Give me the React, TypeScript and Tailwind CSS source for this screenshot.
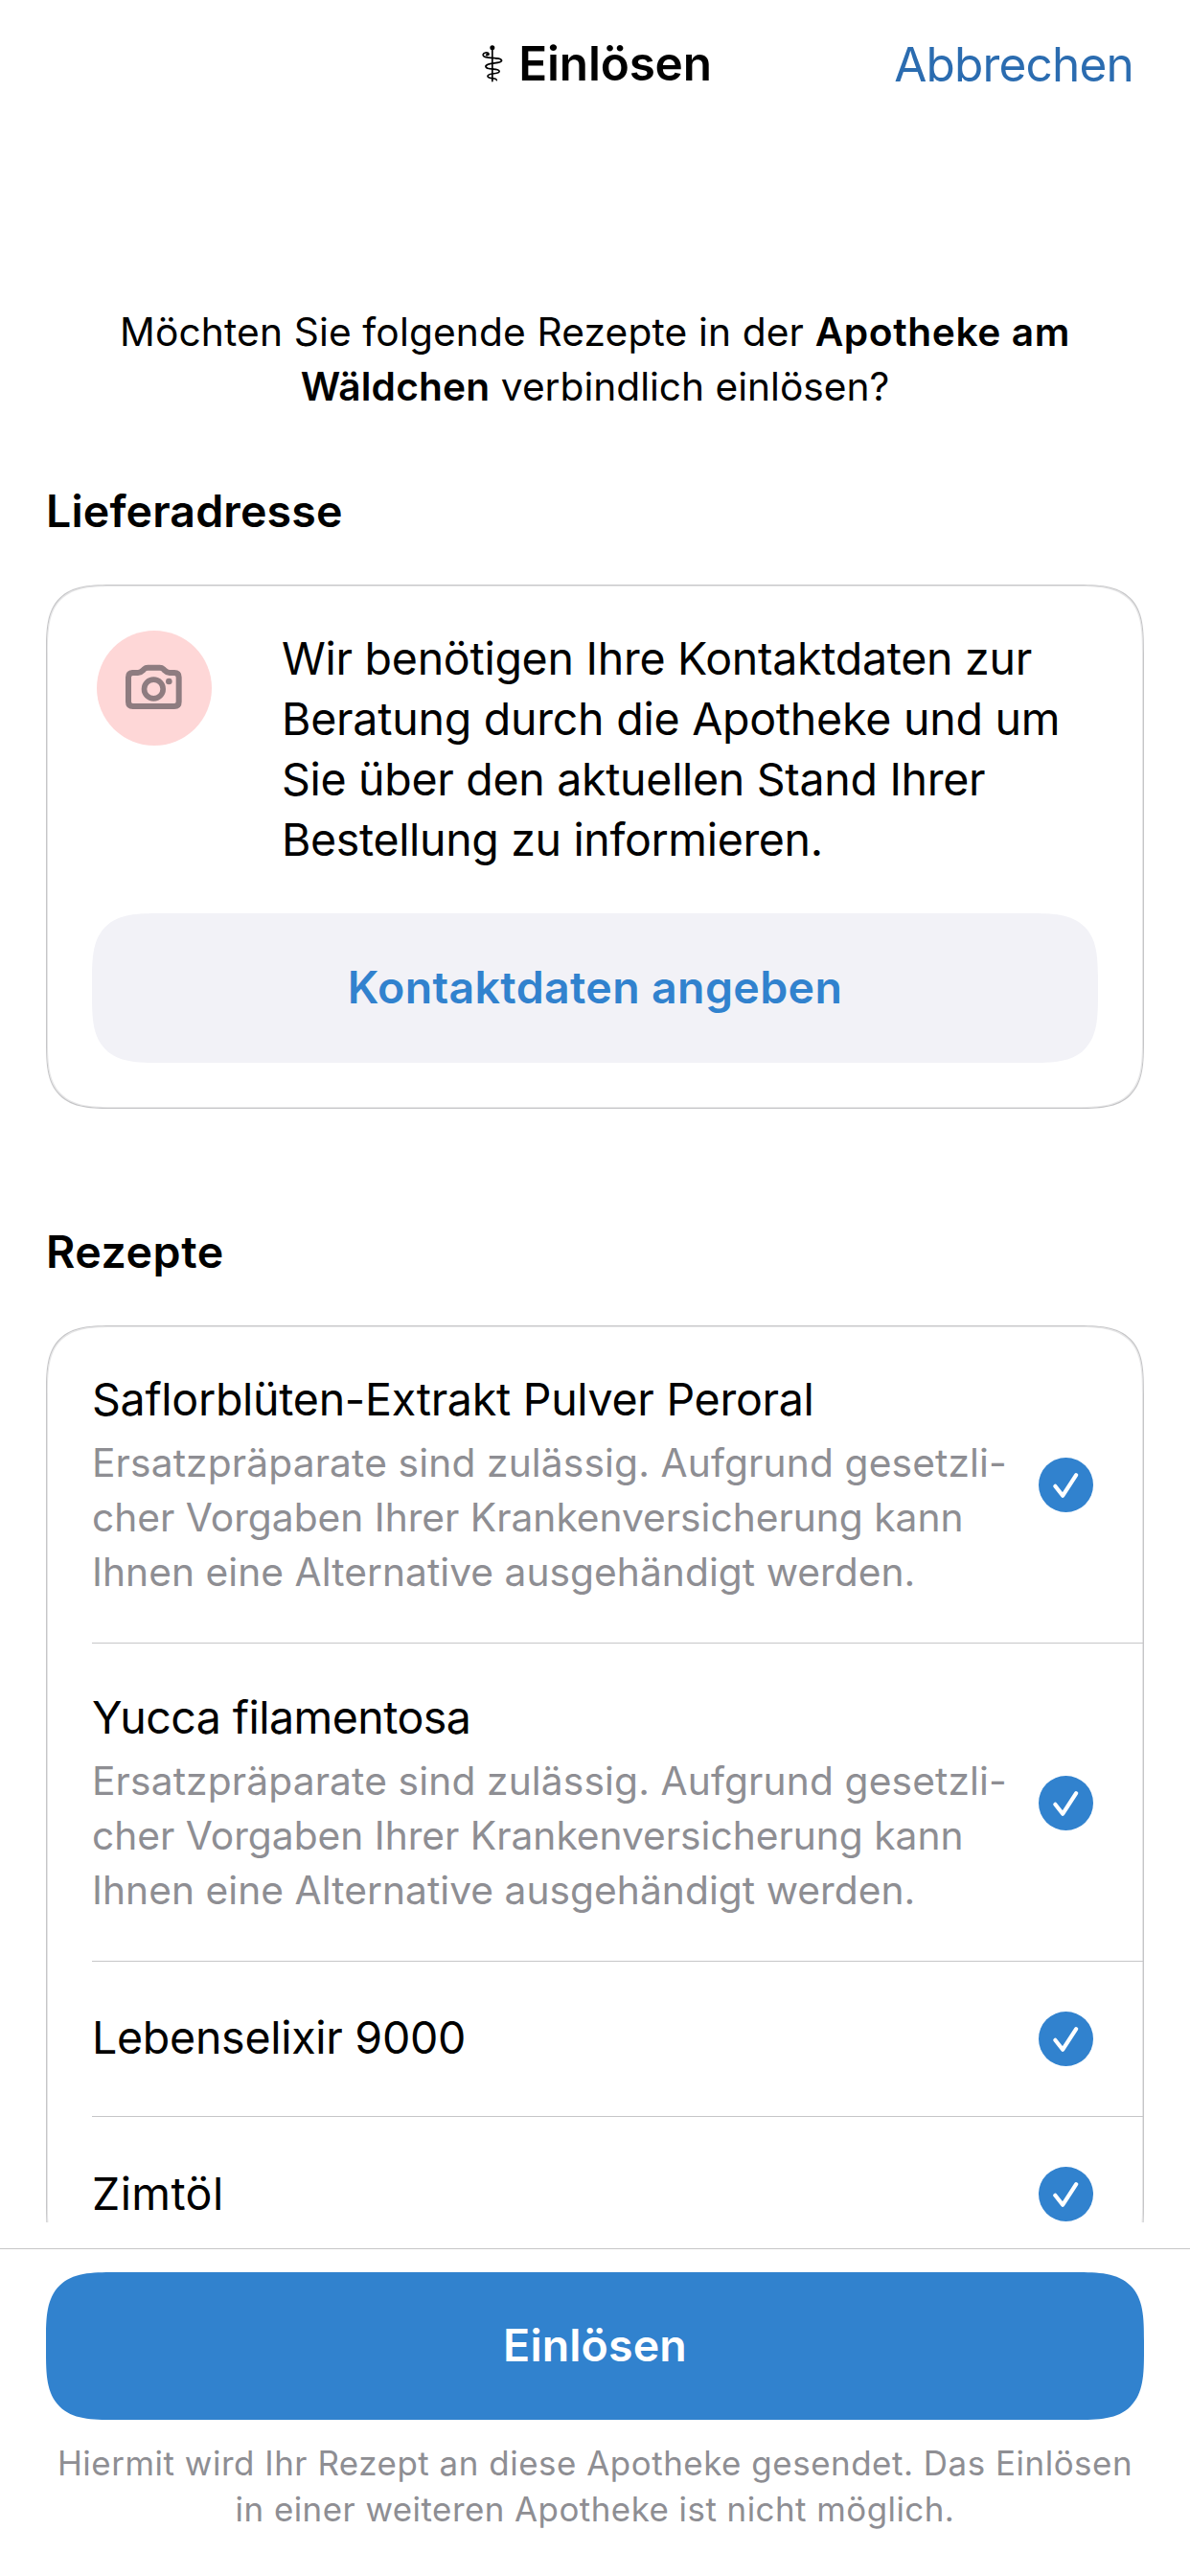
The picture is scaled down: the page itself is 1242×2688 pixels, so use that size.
import type { ReactNode } from "react";

type Prescription = {
  title: string;
  titleClass: string;
  rowClass: string;
  checkClass?: string;
  substitution: boolean;
  last?: boolean;
};

const prescriptions: Prescription[] = [
  {
    title: "Saflorblüten-Extrakt Pulver Peroral",
    titleClass: "tracking-[-0.27px]",
    rowClass: "pt-[45px] pb-[45px]",
    substitution: true,
  },
  {
    title: "Yucca filamentosa",
    titleClass: "tracking-[-0.53px]",
    rowClass: "pt-[46px] pb-[45px]",
    substitution: true,
  },
  {
    title: "Lebenselixir 9000",
    titleClass: "tracking-[-0.27px]",
    rowClass: "pt-12 pb-[50px]",
    checkClass: "mt-0.5",
    substitution: false,
  },
  {
    title: "Zimtöl",
    titleClass: "tracking-[0.4px]",
    rowClass: "pt-[49px] pb-[50px]",
    substitution: false,
    last: true,
  },
];

function StaffIcon() {
  return (
    <svg viewBox="20 15 70 120" className="h-10 w-[23.33px] shrink-0" fill="none" stroke="#000" strokeLinecap="round" role="img" aria-label="Äskulapstab">
      <circle cx="55.5" cy="26" r="7.5" fill="#000" stroke="none" />
      <path d="M55.5 26V131" strokeWidth="5" />
      <path d="M43 48.500C46 43 40 41 34 42C26 43.500 24 50 30 54C38 59 54 57 70 60" strokeWidth="5" />
      <path d="M42 48L38 49" strokeWidth="6.500" />
      <path d="M68 59.500C80 60 85 63.500 84.500 67C84 73 70 73.500 55 75.500C42 77.500 35 80 35 85C35 91 46 93 58 93.500" strokeWidth="5.500" />
      <path d="M57 93.500C70 94 77.500 96 77.500 100.500C77.500 106 66 106.500 56 108C46 109.500 41 111 41 115.500C41 120 49 121.500 57 122" strokeWidth="5" />
      <path d="M56 122C64 122.500 69 124 69 128" strokeWidth="4.500" />
    </svg>
  );
}

function CameraIcon() {
  return (
    <svg viewBox="0 0 360 360" className="size-[120px]" fill="none" stroke="#8e7c80" strokeLinejoin="round" aria-hidden="true">
      <path
        d="M111 132H129C137 132 141 128 145 124L149 120C152 117 155 116 160 116H197C202 116 205 117 208 120L212 124C216 128 220 132 228 132H243Q257 132 257 146V223Q257 237 243 237H113Q99 237 99 223V146Q99 132 113 132Z"
        strokeWidth="18"
      />
      <circle cx="178" cy="183" r="29.500" strokeWidth="17" />
      <circle cx="226" cy="159" r="10" fill="#8e7c80" stroke="none" />
    </svg>
  );
}

function CheckBadge({ className = "" }: { className?: string }) {
  return (
    <svg viewBox="0 0 57 57" className={`size-[57px] shrink-0 ${className}`} fill="none" aria-hidden="true">
      <circle cx="28.5" cy="28.5" r="28.5" fill="#3182ce" />
      <path d="M17.300 29.800L25.200 39.700L39.200 18.200" stroke="#fff" strokeWidth="4.200" strokeLinecap="round" strokeLinejoin="round" />
    </svg>
  );
}

function SectionTitle({ className, children }: { className: string; children: ReactNode }) {
  return <h2 className={`text-[46.5px] leading-[63px] font-semibold ${className}`}>{children}</h2>;
}

function Card({ className, children }: { className: string; children: ReactNode }) {
  return (
    <section
      className={`mt-[45px] shrink-0 rounded-[72px] border border-[#c6c6c8] shadow-[inset_0_0_0_1px_#e6e6e7] [corner-shape:superellipse(1.67)] ${className}`}
    >
      {children}
    </section>
  );
}

function SubstitutionNote() {
  return (
    <p className="mt-1.5 text-[40.7px] leading-[57px] text-[#8e8e93]">
      <span className="block tracking-[0.14px]">Ersatzpräparate sind zulässig. Aufgrund gesetzli-</span>
      <span className="block">cher Vorgaben Ihrer Krankenversicherung kann</span>
      <span className="block tracking-[0.05px]">Ihnen eine Alternative ausgehändigt werden.</span>
    </p>
  );
}

export default function App() {
  return (
    <div className="flex h-[2688px] w-[1242px] flex-col overflow-hidden bg-white font-[Inter,sans-serif] whitespace-nowrap text-black">
      <header className="flex h-[132px] shrink-0 items-center justify-between pr-[59px] pl-[502px]">
        <h1 className="flex items-center gap-4 text-[49.5px] leading-[60px] font-semibold tracking-[-0.2px]">
          <StaffIcon />
          Einlösen
        </h1>
        <button className="mt-0.5 text-[49.5px] leading-[60px] tracking-[-0.81px] text-[#2b6cb0]">Abbrechen</button>
      </header>

      <main className="flex min-h-0 flex-1 flex-col overflow-hidden px-12 pt-[186px]">
        <p className="shrink-0 text-center text-[40.7px] leading-[57px]">
          <span className="block">
            <span className="tracking-[0.14px]">Möchten Sie folgende Rezepte in der </span>
            <b className="font-semibold tracking-[0.6px]">Apotheke am</b>
          </span>
          <span className="block">
            <b className="font-semibold tracking-[0.18px]">Wäldchen</b>
            <span className="tracking-[-0.02px]"> verbindlich einlösen?</span>
          </span>
        </p>

        <SectionTitle className="mt-[70px] tracking-[0.15px]">Lieferadresse</SectionTitle>
        <Card className="px-[47px] pt-[45px] pb-[47px]">
          <div className="flex items-start">
            <div className="mt-0.5 ml-[5px] size-[120px] shrink-0 rounded-full bg-[#fed7d7]">
              <CameraIcon />
            </div>
            <p className="ml-[73px] text-[46.5px] leading-[63px] tracking-[-0.27px]">
              Wir benötigen Ihre Kontaktdaten zur
              <br />
              <span className="tracking-[-0.24px]">Beratung durch die Apotheke und um</span>
              <br />
              <span className="tracking-[-0.3px]">Sie über den aktuellen Stand Ihrer</span>
              <br />
              <span className="tracking-[-0.35px]">Bestellung zu informieren.</span>
            </p>
          </div>
          <button className="mt-[45px] flex h-[156px] w-full items-center justify-center rounded-[72px] bg-[#f2f2f7] text-[46.5px] font-semibold tracking-[0.35px] text-[#3182ce] [corner-shape:superellipse(1.67)]">
            Kontaktdaten angeben
          </button>
        </Card>

        <SectionTitle className="mt-[118px] tracking-[0.55px]">Rezepte</SectionTitle>
        <Card className="pl-[47px]">
          {prescriptions.map((item) => (
            <div
              key={item.title}
              className={`flex items-center justify-between pr-[52px] ${item.rowClass} ${item.last ? "" : "border-b border-[#c6c6c8]"}`}
            >
              <div>
                <h3 className={`text-[46.5px] leading-[63px] ${item.titleClass}`}>{item.title}</h3>
                {item.substitution && <SubstitutionNote />}
              </div>
              <CheckBadge className={item.checkClass} />
            </div>
          ))}
        </Card>
      </main>

      <footer className="mt-[27px] h-[342px] shrink-0 border-t border-[#c6c6c8] px-12 pt-6">
        <button className="flex h-[154px] w-full items-center justify-center rounded-[72px] bg-[#3182ce] text-[46.5px] font-semibold tracking-[0.13px] text-white [corner-shape:superellipse(1.67)]">
          Einlösen
        </button>
        <p className="mt-[21px] text-center text-[34.9px] leading-[48px] text-[#8e8e93]">
          <span className="block tracking-[0.54px]">Hiermit wird Ihr Rezept an diese Apotheke gesendet. Das Einlösen</span>
          <span className="block tracking-[0.47px]">in einer weiteren Apotheke ist nicht möglich.</span>
        </p>
      </footer>
    </div>
  );
}
